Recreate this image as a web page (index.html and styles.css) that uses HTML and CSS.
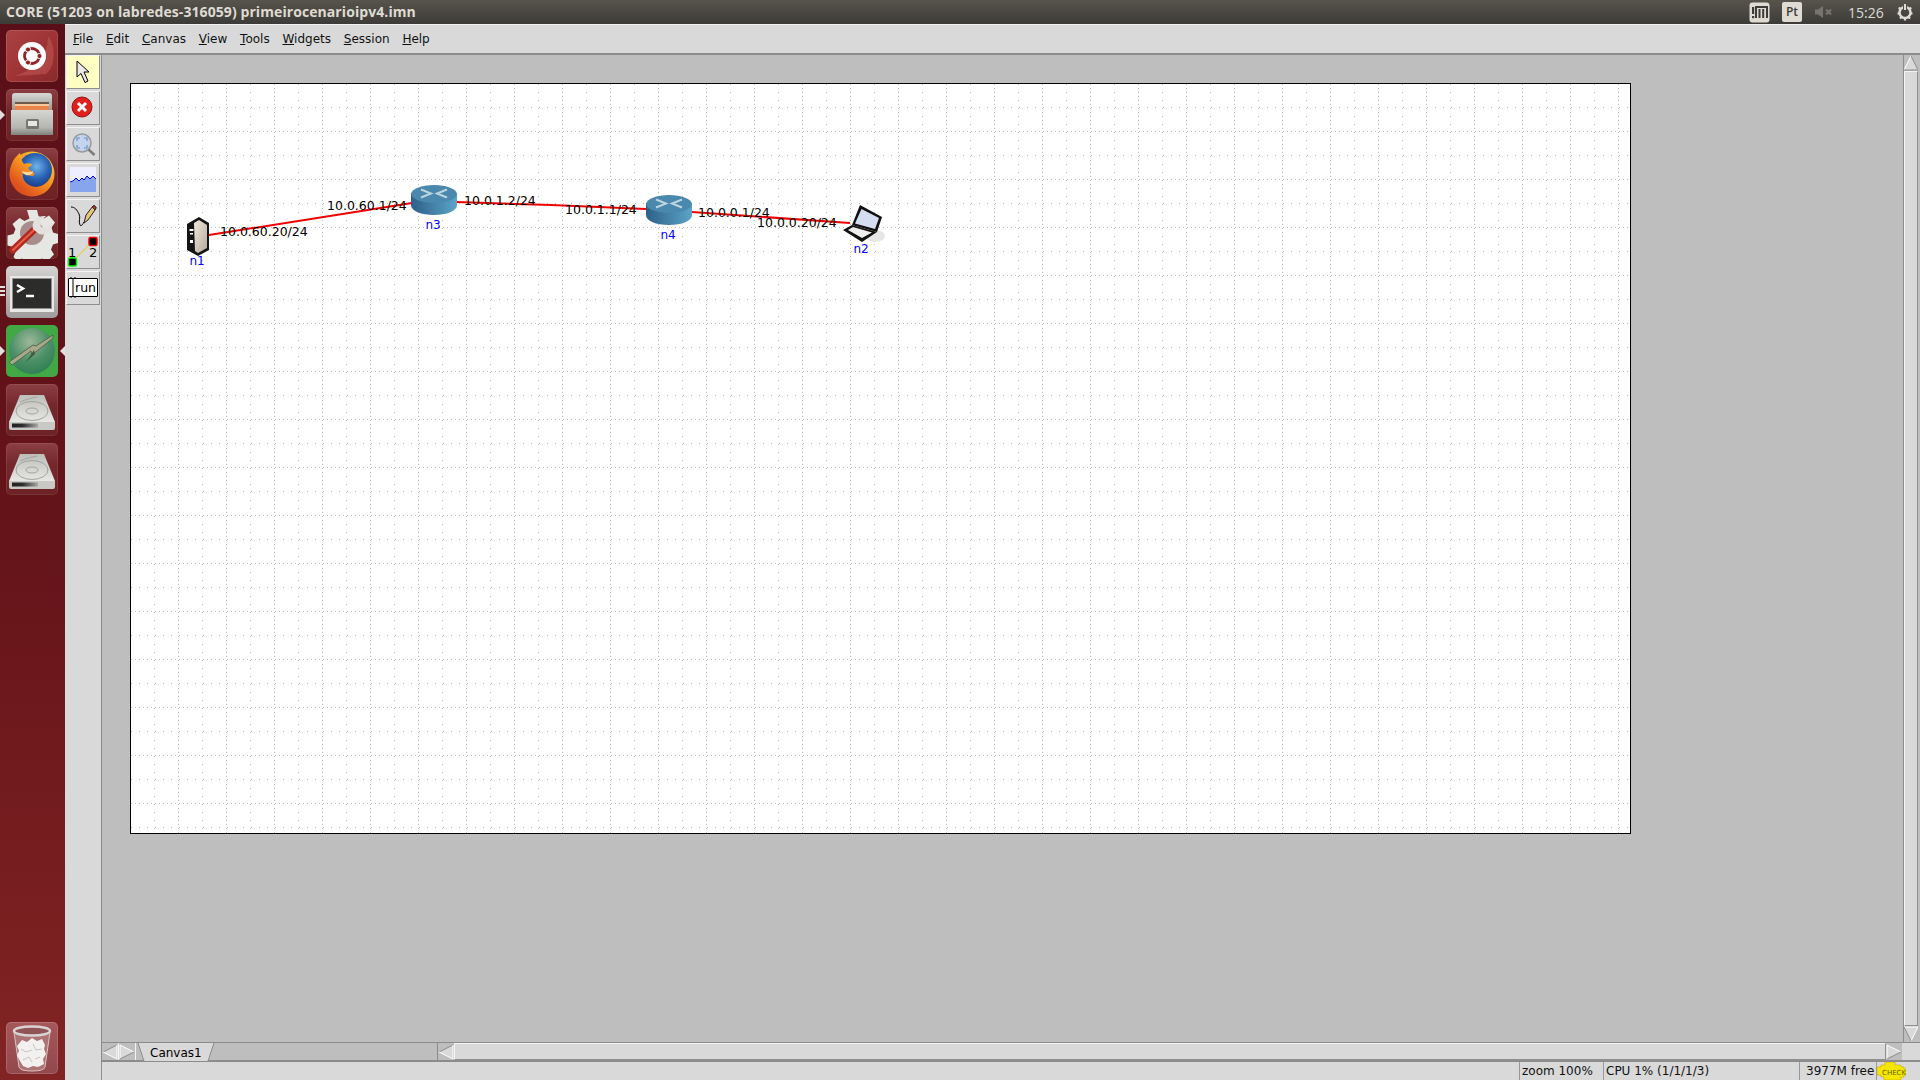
FILE: index.html
```html
<!DOCTYPE html>
<html lang="en">
<head>
<meta charset="utf-8">
<title>CORE</title>
<link rel="stylesheet" href="styles.css">
</head>
<body>
<div class="screen">
  <header class="panel">
    <div class="panel-title">CORE (51203 on labredes-316059) primeirocenarioipv4.imn</div>
    <div class="tray">
      <svg class="tray-m" width="21" height="21" viewBox="0 0 21 21"><rect x="0.5" y="0.5" width="20" height="20" rx="3" class="f-tray"/><rect x="3" y="5" width="2.2" height="7" class="f-dark"/><rect x="3" y="14" width="2.2" height="2.2" class="f-dark"/><path d="M7 16V5h11v11M10.5 7v9M14.2 7v9" class="s-dark"/></svg>
      <span class="tray-lang">Pt</span>
      <svg class="tray-vol" width="18" height="14" viewBox="0 0 18 14"><path d="M0 4.500h3L8 1v12L3 9.500H0z" class="f-mute"/><path d="M11 4.500l5 5M16 4.500l-5 5" class="s-mute"/></svg>
      <span class="tray-clock">15:26</span>
      <svg class="tray-gear" width="18" height="18" viewBox="0 0 18 18"><circle cx="9" cy="9.500" r="5.500" class="s-gear"/><path d="M9 1.500v6" class="s-gear-bg"/><path d="M9 1v6" class="s-gear-thin"/><path d="M9 15v2.500M2.800 4.500l1.500 1.500M15.200 4.500l-1.500 1.500M1.500 10.500h2M14.500 10.500h2M4 15.500l1.300-1.300M14 15.500l-1.300-1.300" class="s-gear-thin"/></svg>
    </div>
  </header>

  <div class="desk">
    <nav class="launcher">
      <div class="tile tile-dash">
        <svg width="52" height="52" viewBox="0 0 52 52"><path d="M8 46C30 40 42 26 42 6c8 10 8 30-2 38z" class="f-swirl"/><circle cx="26" cy="26" r="14" class="f-white"/><circle cx="26" cy="26" r="7.500" class="s-ubuntu"/><circle cx="33.500" cy="26" r="2.600" class="f-ubuntu-dot"/><circle cx="22" cy="19.500" r="2.600" class="f-ubuntu-dot"/><circle cx="22" cy="32.500" r="2.600" class="f-ubuntu-dot"/></svg>
      </div>
      <div class="tile tile-plain">
        <span class="pip-tri pip-left"></span>
        <svg width="52" height="52" viewBox="0 0 52 52"><defs><linearGradient id="cab" x1="0" y1="0" x2="0" y2="1"><stop offset="0" stop-color="#d6d6d2"/><stop offset="0.7" stop-color="#b5b6b1"/><stop offset="1" stop-color="#7f817c"/></linearGradient><linearGradient id="cabtop" x1="0" y1="0" x2="0" y2="1"><stop offset="0" stop-color="#d8d8d4"/><stop offset="1" stop-color="#8f8f8a"/></linearGradient></defs><path d="M6 7Q6 4 9 4H43Q46 4 46 7V24H6z" fill="url(#cabtop)"/><rect x="9" y="13" width="34" height="9" class="f-folder-back"/><rect x="9" y="15" width="34" height="2" class="f-folder-hi"/><rect x="9" y="17" width="34" height="5" class="f-folder"/><path d="M5 21H47V46H5z" fill="url(#cab)"/><rect x="20" y="30" width="13" height="10" rx="1.500" class="f-handle"/><rect x="22" y="32" width="9" height="5" class="f-handle-in"/></svg>
      </div>
      <div class="tile tile-plain">
        <svg width="52" height="52" viewBox="0 0 52 52"><defs><radialGradient id="fxb" cx="0.55" cy="0.4" r="0.7"><stop offset="0" stop-color="#6fb4ea"/><stop offset="0.5" stop-color="#2a63b4"/><stop offset="1" stop-color="#142f7c"/></radialGradient><linearGradient id="fxo" x1="1" y1="0" x2="0.2" y2="1"><stop offset="0" stop-color="#ffe24a"/><stop offset="0.45" stop-color="#f79a20"/><stop offset="1" stop-color="#d9401e"/></linearGradient></defs><circle cx="26" cy="26" r="22.500" fill="url(#fxo)"/><circle cx="29" cy="22" r="17" fill="url(#fxb)"/><path d="M14 5C6 11 3 20 5 29c2 6 7 12 15 14 8 2 15-1 20-6-5 2-12 3-17 0-5-3-7-8-6-12l8 3c3 0 4-2 3-3-3-2-5-3-6-5 2-2 4-2 4-4-3-1-6-1-8 0-2-2-3-6-4-11z" fill="url(#fxo)"/><path d="M16 23c3 1 8 2 11 0 0 3-4 5-7 4-2-1-4-2-4-4z" class="f-fox-lite"/></svg>
      </div>
      <div class="tile tile-plain">
        <svg width="52" height="52" viewBox="0 0 52 52"><path d="M21 3h10l1.500 6 5.500 2.500 5-3 6 7-3.500 5 1.500 5 5 1.500v9l-5 1.500-2 5 3 5-7 7-5-3-5 2-1.500 5H22l-1.500-5-5-2-4 2.500-4-4 2-5-2-5-6-1.500v-10l6-1.500 2-5-3-5 7-6 5 3 5-2.500z" class="f-gear-tile"/><circle cx="26" cy="26" r="12" class="f-gear-hole"/><path d="M7 43 30 21" class="s-wrench"/><path d="M7 43 30 21" class="s-wrench-hi"/><path d="M27 22c-2-7 4-14 13-13l-6 6 1 5 5 1 6-6c1 9-6 14-13 12z" class="f-wrench"/></svg>
      </div>
      <div class="tile tile-term">
        <span class="pip-dots"><i></i><i></i><i></i></span>
        <svg width="52" height="52" viewBox="0 0 52 52"><rect x="4" y="10" width="44" height="36" class="f-term-frame"/><rect x="6" y="12" width="40" height="31" class="f-term-edge"/><rect x="7" y="13" width="38" height="29" class="f-term-screen"/><path d="M11 19l6 3.500-6 3.500" class="s-white2"/><path d="M20 30h8" class="s-white2"/></svg>
      </div>
      <div class="tile tile-green">
        <span class="pip-tri pip-left"></span>
        <span class="pip-tri pip-right"></span>
        <svg width="52" height="52" viewBox="0 0 52 52"><defs><radialGradient id="gl" cx="0.45" cy="0.3" r="0.75"><stop offset="0" stop-color="#9db999"/><stop offset="0.55" stop-color="#4d9068"/><stop offset="1" stop-color="#2c7d52"/></radialGradient></defs><circle cx="26" cy="26" r="23" fill="url(#gl)"/><path d="M3 37 27 20 30 21 47 10 47 13 26 30 25 26 6 40z" class="f-needle"/><path d="M20 37 28 25 29 29z" class="s-needle-dark"/></svg>
      </div>
      <div class="tile tile-plain">
        <svg width="52" height="52" viewBox="0 0 52 52"><defs><linearGradient id="dsk" x1="0" y1="0" x2="0" y2="1"><stop offset="0" stop-color="#bdbdba"/><stop offset="1" stop-color="#f0f0ec"/></linearGradient><linearGradient id="slot" x1="0" y1="0" x2="1" y2="0"><stop offset="0" stop-color="#222"/><stop offset="0.4" stop-color="#2c2c2c"/><stop offset="1" stop-color="#a8a8a4"/></linearGradient><g id="disk"><path d="M14 11H38L49 38V44H3V38z" fill="url(#dsk)"/><ellipse cx="26" cy="27" rx="16" ry="9.500" class="s-disk"/><ellipse cx="26" cy="27" rx="6" ry="3" class="s-disk"/><path d="M14 18C20 15 27 14 31 13" class="s-disk"/><path d="M3 38H49V44Q49 46 47 46H5Q3 46 3 44z" class="f-disk-front"/><rect x="6" y="39.500" width="26" height="4" fill="url(#slot)"/></g></defs><use href="#disk"/></svg>
      </div>
      <div class="tile tile-plain">
        <svg width="52" height="52" viewBox="0 0 52 52"><use href="#disk"/></svg>
      </div>
      <div class="tile tile-trash">
        <svg width="52" height="52" viewBox="0 0 52 52"><path d="M8 10 13 45Q14 49 26 49T39 45L44 10z" class="f-glass"/><path d="M11 24l5-6 5 2 5-4 5 3 5-2 3 6-1 4 2 5-3 5 1 5-6 3-5-1-5 2-5-2-3-5-3-6 2-4z" class="f-paper"/><path d="M15 27l5 3 6-2M27 22l3 6 6-1M17 38l6-3 3 5M29 37l5-2" class="s-paper"/><ellipse cx="26" cy="9" rx="18" ry="4.500" class="s-rim"/></svg>
      </div>
    </nav>

    <div class="app">
      <div class="menubar">
        <span class="menu"><u>F</u>ile</span>
        <span class="menu"><u>E</u>dit</span>
        <span class="menu"><u>C</u>anvas</span>
        <span class="menu"><u>V</u>iew</span>
        <span class="menu"><u>T</u>ools</span>
        <span class="menu"><u>W</u>idgets</span>
        <span class="menu"><u>S</u>ession</span>
        <span class="menu"><u>H</u>elp</span>
      </div>
      <div class="work">
        <aside class="toolbar">
          <div class="tool tool-active">
            <svg width="34" height="34" viewBox="0 0 34 34"><path d="M11 6V22l4-3.500 4 9 3-1.500-4-9h5z" class="f-arrow"/></svg>
          </div>
          <div class="tool">
            <svg width="34" height="34" viewBox="0 0 34 34"><circle cx="16" cy="16" r="10" class="f-stop"/><path d="M12 12l8 8M20 12l-8 8" class="s-stop"/></svg>
          </div>
          <div class="tool">
            <svg width="34" height="34" viewBox="0 0 34 34"><circle cx="16" cy="16" r="9" class="f-lens"/><path d="M11 14v-3h3M18 11h3v3M21 18v3h-3M14 21h-3v-3" class="s-lens"/><path d="M22.500 22.500l6 5.500" class="s-handle"/></svg>
          </div>
          <div class="tool">
            <svg width="34" height="34" viewBox="0 0 34 34"><rect x="4" y="4" width="26" height="25" class="f-chart-bg"/><path d="M4 19l3-1 3-3 3 3 3-3 2 2 3-4 3 3 3-3 3 3v13H4z" class="f-chart"/><path d="M4 19l3-1 3-3 3 3 3-3 2 2 3-4 3 3 3-3 3 3" class="s-chart"/></svg>
          </div>
          <div class="tool">
            <svg width="34" height="34" viewBox="0 0 34 34"><path d="M5 8c4 0 6 3 8 7 2 4-1 7 1 11 1 2 3-1 4-3" class="s-curve"/><path d="M18 24l2-8 7-9c1-1 3 0 3 2l-1 2-7 10z" class="f-pencil"/><path d="M26 8l3 3 1-2c0-2-2-3-4-1z" class="f-eraser"/></svg>
          </div>
          <div class="tool">
            <svg width="34" height="34" viewBox="0 0 34 34"><path d="M6 27 27 6" class="s-yellow"/><rect x="2.500" y="23" width="8" height="8" rx="1.500" class="f-node-green"/><rect x="23" y="2.500" width="8" height="8" rx="1.500" class="f-node-red"/><text x="2" y="22" class="t-num">1</text><text x="23" y="22" class="t-num">2</text></svg>
          </div>
          <div class="tool">
            <span class="run-box"><svg width="8" height="19" viewBox="0 0 8 19"><path d="M1 0h2l1 1 1-1h2M4 1v17M1 19h2l1-1 1 1h2" class="s-ibeam"/></svg><span class="run-text">run</span></span>
          </div>
        </aside>
        <div class="main">
          <div class="upper">
            <div class="stage">
              <div class="canvas">
                <svg class="canvas-svg" width="1499" height="749" viewBox="131 84 1499 749">
                  <defs>
                    <pattern id="grid" x="131" y="84" width="48" height="48" patternUnits="userSpaceOnUse">
                      <path d="M23.500 0V48" class="g-sparse"/>
                      <path d="M47.500 0V48" class="g-dense"/>
                      <path d="M0 23.500H48" class="g-sparse"/>
                      <path d="M0 47.500H48" class="g-dense"/>
                    </pattern>
                    <linearGradient id="rt" x1="0" y1="0" x2="1" y2="0"><stop offset="0" stop-color="#2e5f88"/><stop offset="1" stop-color="#5ba5c8"/></linearGradient>
                    <linearGradient id="srv" x1="0" y1="0" x2="1" y2="1"><stop offset="0" stop-color="#efe9df"/><stop offset="1" stop-color="#b7a99a"/></linearGradient>
                    <g id="router">
                      <path d="M0 8V20C0 26 10 30 23 30S46 26 46 20V8z" fill="url(#rt)"/>
                      <ellipse cx="23" cy="9" rx="22.800" ry="9" class="f-router-top"/>
                      <path d="M10 4.500 20 8.500 10 12.500M36 4.500 26 8.500 36 12.500" class="s-router-a"/>
                    </g>
                  </defs>
                  <rect x="131" y="84" width="1499" height="749" fill="url(#grid)"/>
                  <polyline points="209,235 412,203" class="link"/>
                  <polyline points="456,202 551,205 646,209" class="link"/>
                  <polyline points="692,212 850,223" class="link"/>
                  <g transform="translate(186 217)">
                    <path d="M13 0 23 6V33L12 39 1 33V7z" class="f-srv-edge"/>
                    <path d="M8 6 13 3 21 8V31L12 36 9 34z" fill="url(#srv)"/>
                    <rect x="3.500" y="12" width="4" height="2" class="f-white"/>
                    <rect x="4" y="16" width="3" height="1.500" class="f-white"/>
                    <rect x="4" y="23" width="3" height="3" class="f-white"/>
                  </g>
                  <use href="#router" x="411" y="185"/>
                  <use href="#router" x="646" y="195"/>
                  <g transform="translate(842 205)">
                    <ellipse cx="33" cy="31" rx="10" ry="6" class="f-shadow"/>
                    <path d="M18 0 40 12 35 27 10 20z" class="f-lap-lid"/>
                    <path d="M19.500 4 37 13 33 24 13 18.500z" class="f-lap-screen"/>
                    <path d="M1 25 10 20 35 27 20 37z" class="f-lap-base"/>
                    <path d="M6 25 11 22 30 27.500 20 33z" class="f-lap-keys"/>
                  </g>
                  <text x="220" y="236" class="t-addr">10.0.60.20/24</text>
                  <text x="327" y="210" class="t-addr">10.0.60.1/24</text>
                  <text x="464" y="205" class="t-addr">10.0.1.2/24</text>
                  <text x="565" y="214" class="t-addr">10.0.1.1/24</text>
                  <text x="698" y="217" class="t-addr">10.0.0.1/24</text>
                  <text x="757" y="227" class="t-addr">10.0.0.20/24</text>
                  <text x="197" y="265" class="t-node">n1</text>
                  <text x="433" y="229" class="t-node">n3</text>
                  <text x="668" y="239" class="t-node">n4</text>
                  <text x="861" y="253" class="t-node">n2</text>
                </svg>
              </div>
            </div>
            <div class="vscroll">
              <svg class="arrow-v" width="14" height="16" viewBox="0 0 14 16"><path d="M7 1 14 15H0z" class="f-arrow-btn"/><path d="M0 15 7 1" class="s-white1"/><path d="M7 1 14 15H0" class="s-grey1"/></svg>
              <div class="v-thumb"></div>
              <svg class="arrow-v" width="14" height="16" viewBox="0 0 14 16"><path d="M7 15 14 1H0z" class="f-arrow-btn"/><path d="M0 1H14L7 15" class="s-white1"/><path d="M0 1 7 15" class="s-grey1"/></svg>
            </div>
          </div>
          <div class="lower">
            <div class="tabs">
              <div class="tab-btns">
                <span class="tab-btn"><svg width="16" height="16" viewBox="0 0 16 16"><path d="M1 8 15 1V15z" class="f-arrow-btn"/><path d="M1 8 15 1" class="s-grey1"/><path d="M15 1V15L1 8" class="s-white1"/></svg></span>
                <span class="tab-btn"><svg width="16" height="16" viewBox="0 0 16 16"><path d="M15 8 1 1V15z" class="f-arrow-btn"/><path d="M1 15V1L15 8" class="s-white1"/><path d="M1 15 15 8" class="s-grey1"/></svg></span>
              </div>
              <svg class="tab" width="78" height="18" viewBox="0 0 78 18"><path d="M1 0H77L71 18H7z" class="f-tab"/><path d="M1 0 7 18M77 0 71 18" class="s-tab"/><text x="13" y="14" class="t-tab">Canvas1</text></svg>
              <div class="tab-fill"></div>
            </div>
            <div class="hscroll">
              <svg class="arrow-h" width="16" height="16" viewBox="0 0 16 16"><path d="M1 8 15 1V15z" class="f-arrow-btn"/><path d="M1 8 15 1" class="s-grey1"/><path d="M15 1V15L1 8" class="s-white1"/></svg>
              <div class="h-thumb"></div>
              <svg class="arrow-h" width="16" height="16" viewBox="0 0 16 16"><path d="M15 8 1 1V15z" class="f-arrow-btn"/><path d="M1 15V1L15 8" class="s-white1"/><path d="M1 15 15 8" class="s-grey1"/></svg>
            </div>
            <div class="corner"></div>
          </div>
          <footer class="status">
            <div class="cell cell-fill"></div>
            <div class="cell cell-zoom">zoom 100%</div>
            <div class="cell cell-cpu">CPU 1% (1/1/1/3)</div>
            <div class="cell cell-mem">3977M free</div>
            <div class="cell cell-check">
              <svg width="29" height="18" viewBox="0 0 29 18"><path d="M0 5H4V3H8V0H18V3H24V5H27V7H29V13H27V15H24V18H7V15H4V13H0z" class="f-check"/><text x="5" y="13" class="t-check">CHECK</text></svg>
            </div>
          </footer>
        </div>
      </div>
    </div>
  </div>
</div>
</body>
</html>
```

FILE: styles.css
```css
* { box-sizing: border-box; }
html, body { margin: 0; padding: 0; }
body { width: 1920px; height: 1080px; overflow: hidden; font-family: "DejaVu Sans", sans-serif; background: #d9d9d9; }
svg { display: block; }

.screen { width: 1920px; height: 1080px; display: flex; flex-direction: column; }

/* Top panel */
.panel { height: 24px; flex: none; display: flex; align-items: center; justify-content: space-between; background: linear-gradient(#57544c, #3c3b37); padding-left: 6px; }
.panel-title { font-family: "Open Sans", sans-serif; font-weight: 700; font-size: 14px; line-height: 22px; margin-top: -1px; letter-spacing: 0.08px; color: #dfdbd2; white-space: nowrap; }
.tray { display: flex; align-items: center; height: 24px; }
.tray-m { margin-right: 12px; }
.f-tray { fill: #dfdbd2; }
.f-dark { fill: #3c3b37; }
.s-dark { fill: none; stroke: #3c3b37; stroke-width: 2; }
.tray-lang { width: 20px; height: 20px; border-radius: 2px; background: #dfdbd2; color: #3c3b37; font-family: "Open Sans", sans-serif; font-size: 12px; font-weight: 600; line-height: 20px; text-align: center; margin-right: 13px; }
.tray-vol { margin-right: 15px; }
.f-mute { fill: #76746c; }
.s-mute { fill: none; stroke: #76746c; stroke-width: 2; }
.tray-clock { font-family: "Open Sans", sans-serif; font-size: 14px; color: #dfdbd2; width: 36px; margin-right: 12px; }
.tray-gear { margin-right: 6px; }
.s-gear { fill: none; stroke: #dfdbd2; stroke-width: 2.500; }
.s-gear-bg { fill: none; stroke: #3f3e39; stroke-width: 4; }
.s-gear-thin { fill: none; stroke: #dfdbd2; stroke-width: 2.200; }

/* Launcher */
.desk { flex: 1; display: flex; min-height: 0; }
.launcher { width: 65px; flex: none; display: flex; flex-direction: column; gap: 7px; padding: 6px 7px 6px 6px; background: linear-gradient(#5a0f18 0%, #651419 50%, #822424 100%); }
.tile { width: 52px; height: 52px; border-radius: 5px; position: relative; flex: none; }
.tile-dash { background: linear-gradient(135deg, #aa4244, #9c3133 60%, #8a2a2c); box-shadow: inset 0 0 0 1px rgba(255,255,255,.12); }
.tile-plain { background: linear-gradient(#8c3f42, #75282c 40%, #6d2226); box-shadow: inset 0 0 0 1px rgba(255,255,255,.08); }
.tile-term { background: linear-gradient(#d5d3d1, #9e9c9c); }
.tile-green { background: #41a845; }
.tile-trash { margin-top: auto; background: linear-gradient(#a5575a, #93484b); box-shadow: inset 0 0 0 1px rgba(255,255,255,.15); }
.pip-tri { position: absolute; top: 21px; width: 0; height: 0; border-top: 5px solid transparent; border-bottom: 5px solid transparent; }
.pip-left { left: -6px; border-left: 5px solid #e4dedd; }
.pip-right { right: -7px; border-right: 5px solid #e4dedd; }
.pip-dots { position: absolute; left: -6px; top: 20px; display: flex; flex-direction: column; gap: 2px; }
.pip-dots i { display: block; width: 5px; height: 2px; background: #e4dedd; }

.f-white { fill: #fff; }
.f-swirl { fill: #c25a58; opacity: .55; }
.s-ubuntu { fill: none; stroke: #8a2728; stroke-width: 2.800; }
.f-ubuntu-dot { fill: #8a2728; stroke: #fff; stroke-width: 1; }
.f-folder-back { fill: #6d5a48; }
.f-folder { fill: #e9854a; }
.f-folder-hi { fill: #f7c89c; }
.f-handle { fill: #77776f; }
.f-handle-in { fill: #e6e6e2; }
.f-fox-lite { fill: #f9d8a0; }
.f-gear-tile { fill: #e6e6e3; }
.f-gear-hole { fill: #a98d8c; }
.s-wrench { fill: none; stroke: #b02a1f; stroke-width: 7; stroke-linecap: round; }
.s-wrench-hi { fill: none; stroke: #e8604a; stroke-width: 2; stroke-linecap: round; }
.f-wrench { fill: #e2e1de; }
.f-term-frame { fill: #e9e8e6; }
.f-term-edge { fill: #8f8f8d; }
.f-term-screen { fill: #2c2c2a; }
.s-white2 { fill: none; stroke: #fff; stroke-width: 2.500; }
.f-needle { fill: #a7a98a; stroke: #4a5a40; stroke-width: .8; }
.s-needle-dark { fill: #3f5a3c; }
.s-disk { fill: none; stroke: #a2a29e; stroke-width: 1; }
.f-disk-front { fill: #c8c8c4; }
.f-glass { fill: #ad7476; stroke: #d9c3c3; stroke-width: 1; }
.f-paper { fill: #f3f1ef; }
.s-paper { fill: none; stroke: #c9c3c1; stroke-width: 1; }
.s-rim { fill: #915558; stroke: #d8d4d2; stroke-width: 2.500; }

/* App */
.app { flex: 1; min-width: 0; display: flex; flex-direction: column; }
.menubar { height: 31px; flex: none; display: flex; align-items: center; gap: 12.800px; padding: 0 0 1px 8px; background: #d9d9d9; border-top: 1px solid #f2f2f2; border-bottom: 2px solid #8c8c8c; font-size: 12px; color: #111; }
.menu { white-space: nowrap; }

.work { flex: 1; min-height: 0; display: flex; }
.toolbar { width: 37px; flex: none; display: flex; flex-direction: column; gap: 2px; padding: 0 1px; background: #d9d9d9; border-right: 1px solid #8c8c8c; }
.tool { width: 34px; height: 34px; flex: none; background: #d9d9d9; border: 1px solid; border-color: #f4f4f4 #8f8f8f #8f8f8f #f4f4f4; display: flex; align-items: center; justify-content: center; }
.tool > svg { margin: -1px; }
.tool-active { background: #ffffc4; }
.f-arrow { fill: #e8e8e8; stroke: #000; stroke-width: 1; }
.f-stop { fill: #e0201c; stroke: #8f1512; stroke-width: 1; }
.s-stop { fill: none; stroke: #fff; stroke-width: 3; }
.f-lens { fill: #c4d3ee; stroke: #9a9a9a; stroke-width: 1.500; }
.s-lens { fill: none; stroke: #6d90c9; stroke-width: 1.200; }
.s-handle { fill: none; stroke: #7c7c7c; stroke-width: 2.500; }
.f-chart-bg { fill: #eeeeff; }
.f-chart { fill: #87a5ec; }
.s-chart { fill: none; stroke: #0000e0; stroke-width: 1; }
.s-curve { fill: none; stroke: #000; stroke-width: 1; }
.f-pencil { fill: #e8c67d; stroke: #222; stroke-width: 1; }
.f-eraser { fill: #b03a32; stroke: #222; stroke-width: .8; }
.s-yellow { fill: none; stroke: #e6d000; stroke-width: 1; }
.f-node-green { fill: #000; stroke: #00f000; stroke-width: 1.500; }
.f-node-red { fill: #000; stroke: #f00000; stroke-width: 1.500; }
.t-num { font-size: 13px; fill: #000; }
.run-box { width: 30px; height: 19px; margin-top: -2px; background: #fff; border: 1px solid #000; border-radius: 1px; display: flex; align-items: center; }
.run-box svg { flex: none; overflow: visible; }
.s-ibeam { fill: none; stroke: #000; stroke-width: 1; }
.run-text { font-size: 12.500px; line-height: 17px; color: #000; margin-left: -2px; }

.main { flex: 1; min-width: 0; display: flex; flex-direction: column; }
.upper { flex: 1; min-height: 0; display: flex; }
.stage { flex: 1; min-width: 0; background: #bebebe; padding: 28px 0 0 28px; }
.canvas { width: 1501px; height: 751px; background: #fff; border: 1px solid #000; }
.g-sparse { fill: none; stroke: #bdbdbd; stroke-width: 1; stroke-dasharray: 1 7; }
.g-dense { fill: none; stroke: #bdbdbd; stroke-width: 1; stroke-dasharray: 1 3; }
.link { fill: none; stroke: #f00000; stroke-width: 2; }
.f-router-top { fill: #4a88ad; }
.s-router-a { fill: none; stroke: #bcd4e0; stroke-width: 2; }
.f-srv-edge { fill: #141414; }
.f-shadow { fill: #e6e6e6; }
.f-lap-lid { fill: #111; }
.f-lap-screen { fill: #d5def0; }
.f-lap-base { fill: #111; }
.f-lap-keys { fill: #eeeeee; }
.t-addr { font-size: 12.500px; fill: #000; }
.t-node { font-size: 12px; fill: #0000ff; text-anchor: middle; }

.vscroll { width: 17px; flex: none; display: flex; flex-direction: column; padding: 0 2px 0 0; background: #bebebe; border-left: 1px solid #8c8c8c; }
.arrow-v { flex: none; }
.f-arrow-btn { fill: #d9d9d9; }
.s-white1 { fill: none; stroke: #fff; stroke-width: 1; }
.s-grey1 { fill: none; stroke: #8c8c8c; stroke-width: 1; }
.v-thumb { flex: 1; background: #d9d9d9; border: 1px solid; border-color: #f4f4f4 #8f8f8f #8f8f8f #f4f4f4; }

.lower { height: 20px; flex: none; display: flex; background: #bebebe; border-top: 1px solid #8c8c8c; border-bottom: 2px solid #8c8c8c; }
.tabs { width: 335px; flex: none; display: flex; align-items: stretch; }
.tab-btns { display: flex; flex: none; }
.tab-btn { width: 17px; height: 17px; background: #bebebe; display: flex; align-items: center; justify-content: flex-start; border-right: 1px solid #f4f4f4; }
.tab { flex: none; margin-left: 1px; }
.f-tab { fill: #d9d9d9; }
.s-tab { fill: none; stroke: #8c8c8c; stroke-width: 1; }
.t-tab { font-size: 12px; fill: #000; }
.tab-fill { flex: 1; }
.hscroll { flex: 1; min-width: 0; display: flex; align-items: center; background: #bebebe; border-left: 1px solid #8c8c8c; }
.arrow-h { flex: none; }
.h-thumb { flex: 1; height: 17px; background: #d9d9d9; border: 1px solid; border-color: #f4f4f4 #8f8f8f #8f8f8f #f4f4f4; }
.corner { width: 18px; flex: none; background: #d9d9d9; }

.status { height: 18px; flex: none; display: flex; background: #d9d9d9; font-size: 12px; color: #111; }
.cell { border-right: 1px solid #9a9a9a; line-height: 18px; padding-left: 2px; white-space: nowrap; flex: none; }
.cell-fill { flex: 1; padding: 0; }
.cell-zoom { width: 84px; }
.cell-cpu { width: 196px; }
.cell-mem { width: 77px; padding-left: 6px; overflow: visible; }
.cell-check { width: 43px; border-right: 0; padding: 0; }
.f-check { fill: #f5e600; stroke: #c9a800; stroke-width: .6; }
.t-check { font-size: 7px; fill: #6a5e00; }
```
